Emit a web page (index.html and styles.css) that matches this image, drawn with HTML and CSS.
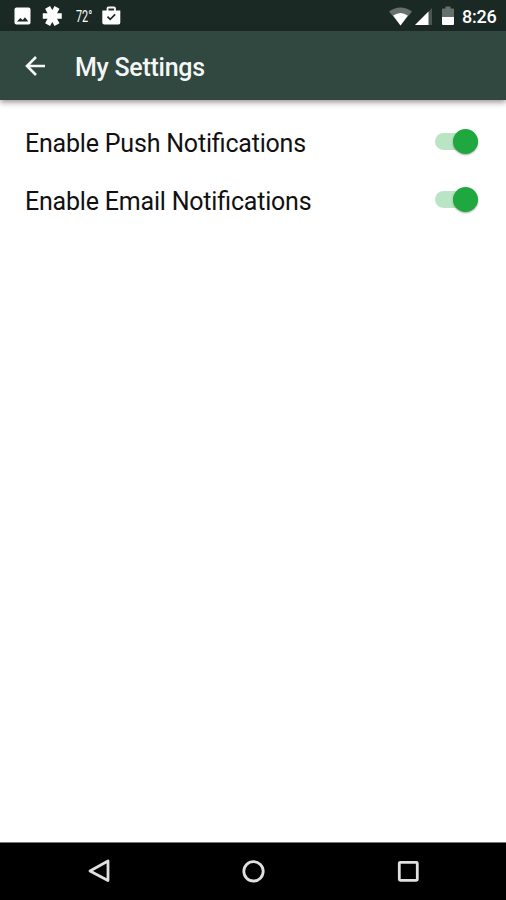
FILE: index.html
```
<!DOCTYPE html>
<html lang="en">
<head>
    <meta charset="UTF-8">
    <meta name="viewport" content="width=device-width, initial-scale=1.0">
    <title>My Settings</title>
    <link rel="stylesheet" href="styles.css">
</head>
<body>
    <div class="status-bar">
        <svg class="status-icons" width="130" height="31" viewBox="0 0 130 31">
            <!-- picture -->
            <rect x="14.5" y="7.5" width="16" height="17" rx="2" fill="#fff"/>
            <path d="M17 21.500l3.300-3.500 2.400 2 2.300-2.700 3.300 4.200z" fill="#1b2925"/>
            <!-- pinwheel -->
            <path d="M42.800 16h19M47.600 7.300l9.400 17.400M57 7.300l-9.400 17.400" stroke="#fff" stroke-width="5.600"/>
            <!-- store bag -->
            <path d="M107.500 11V8.500q0-1 1-1h5.500q1 0 1 1V11" fill="none" stroke="#fff" stroke-width="1.800"/>
            <path d="M102.300 10.500h18v12q0 2-2 2h-14q-2 0-2-2z" fill="#fff"/>
            <path d="M107.500 16.700l2.700 2.700 5-5" fill="none" stroke="#1b2925" stroke-width="1.700"/>
        </svg>
        <span class="temp">72°</span>
        <svg class="signal-icons" width="70" height="31" viewBox="386 0 70 31">
            <!-- wifi -->
            <path d="M389 11.500Q400.500 3.500 412 11.500L400.500 25.500z" fill="#66706d"/>
            <path d="M393.200 15.500Q400.500 10.500 407.800 15.500L400.500 25.500z" fill="#fff"/>
            <!-- cell signal -->
            <path d="M432 8v17h-17z" fill="#4a5552"/>
            <path d="M428.500 11.500V25H415z" fill="#fff"/>
            <!-- battery -->
            <path d="M442 9.500q0-1 1-1h2.500V6.500h5v2h2.500q1 0 1 1V17.500h-12z" fill="#66706d"/>
            <path d="M442 17h12V24q0 1-1 1h-10q-1 0-1-1z" fill="#fff"/>
        </svg>
        <span class="time">8:26</span>
    </div>

    <header>
        <svg class="back" width="22" height="22" viewBox="0 0 22 22">
            <path d="M21 11H3M12 2l-9 9 9 9" fill="none" stroke="#f5f7f6" stroke-width="2.600"/>
        </svg>
        <h1>My Settings</h1>
    </header>

    <main>
        <div class="setting">
            <span class="label">Enable Push Notifications</span>
            <div class="toggle"><div class="thumb"></div></div>
        </div>
        <div class="setting">
            <span class="label">Enable Email Notifications</span>
            <div class="toggle"><div class="thumb"></div></div>
        </div>
    </main>

    <nav>
        <svg width="506" height="57" viewBox="0 0 506 57" fill="none" stroke="#e0e0e0" stroke-width="2.800" stroke-linejoin="round">
            <path d="M108 18v19.500L90 28z"/>
            <circle cx="253.500" cy="28.300" r="9.700"/>
            <rect x="399.300" y="19.300" width="18" height="18" rx="1"/>
        </svg>
    </nav>
</body>
</html>
```

FILE: styles.css
```
body {
    font-family: Roboto, sans-serif;
    margin: 0;
    height: 900px;
    background-color: #fff;
    display: flex;
    flex-direction: column;
    overflow: hidden;
}
svg {
    display: block;
    flex-shrink: 0;
}
.status-bar {
    height: 31px;
    display: flex;
    align-items: center;
    background: #1b2925;
    color: #fff;
}
.temp {
    font-size: 17px;
    line-height: 31px;
    width: 28px;
    margin-left: -54px;
    padding-top: 1px;
    white-space: nowrap;
    transform: scaleX(0.64);
    transform-origin: left;
}
.signal-icons {
    margin-left: 282px;
}
.time {
    margin: 2px 0 0 6px;
    font-size: 18px;
    font-weight: 500;
    letter-spacing: -0.2px;
}
header {
    height: 69px;
    display: flex;
    align-items: center;
    box-sizing: border-box;
    padding: 2px 24px 0;
    background: #30483f;
    color: #f5f7f6;
    box-shadow: 0 2px 6px rgba(40, 20, 30, 0.5);
}
.back {
    margin-bottom: 2px;
}
h1 {
    margin: 2px 0 0 29px;
    font-size: 25px;
    font-weight: 500;
    letter-spacing: -0.28px;
}
main {
    flex: 1;
    padding: 13px 28px 0 25px;
}
.setting {
    height: 58px;
    display: flex;
    align-items: center;
    justify-content: space-between;
}
.label {
    padding-top: 2px;
    font-size: 25px;
    letter-spacing: -0.2px;
    font-feature-settings: "liga" 1;
    color: #111;
}
.toggle {
    width: 43px;
    height: 17px;
    margin-bottom: 1px;
    display: flex;
    align-items: center;
    justify-content: flex-end;
    border-radius: 9px;
    background: #b9e5c4;
}
.thumb {
    width: 25px;
    height: 25px;
    flex-shrink: 0;
    border-radius: 50%;
    background: #1fa83f;
    box-shadow: 0 1px 2px rgba(0, 0, 0, 0.35);
}
nav {
    height: 57px;
    border-top: 1px solid #777;
    background: #000;
}
```
